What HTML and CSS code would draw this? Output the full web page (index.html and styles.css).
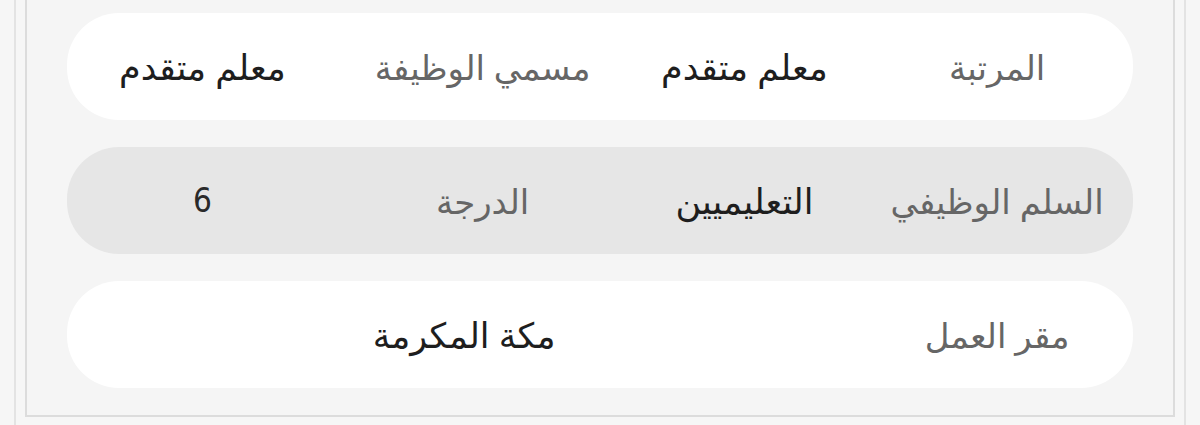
FILE: index.html
```html
<!DOCTYPE html>
<html lang="ar" dir="rtl">
<head>
<meta charset="utf-8">
<title>بيانات الوظيفة</title>
<link rel="stylesheet" href="styles.css">
</head>
<body>
<div class="page">
  <section class="panel">
    <div class="row row-light">
      <span class="label">المرتبة</span>
      <span class="value">معلم متقدم</span>
      <span class="label">مسمي الوظيفة</span>
      <span class="value">معلم متقدم</span>
    </div>
    <div class="row row-shade">
      <span class="label">السلم الوظيفي</span>
      <span class="value">التعليميين</span>
      <span class="label">الدرجة</span>
      <span class="value num">6</span>
    </div>
    <div class="row row-light">
      <span class="label">مقر العمل</span>
      <span class="value wide">مكة المكرمة</span>
    </div>
  </section>
</div>
</body>
</html>
```
FILE: styles.css
```css
html, body {
  margin: 0;
  padding: 0;
  background: #f6f6f6;
}

body {
  font-family: "Noto Sans", "DejaVu Sans", sans-serif;
}

.page {
  margin: 0 14px;
  padding: 0 9px;
  height: 425px;
  box-sizing: border-box;
  border-left: 2px solid #e3e3e3;
  border-right: 2px solid #e3e3e3;
}

.panel {
  display: flex;
  flex-direction: column;
  gap: 27px;
  padding: 13px 40px 27px;
  border: 2px solid #dcdcdc;
  border-top: none;
  background: #f5f5f5;
}

.row {
  display: grid;
  grid-template-columns: 272fr 234fr 290fr 271fr;
  align-items: center;
  height: 107px;
  border-radius: 52px;
}

.row-light {
  background: #ffffff;
}

.row-shade {
  background: #e6e6e6;
}

.label,
.value {
  text-align: center;
  font-size: 34px;
  line-height: 1;
  white-space: nowrap;
}

.label {
  color: #666666;
}

.value {
  color: #1e1e1e;
  font-size: 35px;
}

.value.wide {
  grid-column: span 3;
}

.num {
  font-family: "Liberation Sans Narrow", "DejaVu Sans Condensed", sans-serif;
  font-size: 33px;
  font-weight: 500;
  color: #2a2a2a;
}
```
